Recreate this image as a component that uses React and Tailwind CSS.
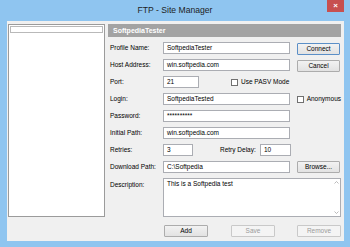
import React from "react";

const font = { fontFamily: '"Liberation Sans", Arial, sans-serif' };

const Field = ({ value, w }) => (
  <div
    className={`h-[12px] border border-[#abadb3] bg-white pl-[3px] text-[6.5px] leading-[10px] text-black ${w}`}
  >
    {value}
  </div>
);

const Button = ({ label, primary, disabled, className = "" }) => (
  <div
    className={`h-[12px] w-[43px] flex items-center justify-center rounded-[1px] border text-[6.5px] ${
      disabled
        ? "border-[#c9c9c9] bg-[#f4f4f4] text-[#9a9a9a]"
        : primary
        ? "border-[#5b8fc7] bg-gradient-to-b from-[#f2f2f2] to-[#e2e2e2] text-black"
        : "border-[#acacac] bg-gradient-to-b from-[#f2f2f2] to-[#e2e2e2] text-black"
    } ${className}`}
  >
    {label}
  </div>
);

const Check = ({ label, className = "" }) => (
  <div className={`flex items-center gap-[3px] ${className}`}>
    <div className="h-[7px] w-[7px] border border-[#707070] bg-white" />
    <span className="text-[6.5px] text-black">{label}</span>
  </div>
);

const Label = ({ text }) => (
  <div className="w-[55px] shrink-0 pl-[2px] text-[6.5px] text-black">{text}</div>
);

const App = () => {
  return (
    <div style={font} className="w-[350px] h-[247px] bg-[#8fc5f0] flex flex-col">
      <div className="relative h-[21px] flex items-center justify-center">
        <span className="text-[8.6px] text-[#1e1e1e] -mt-[1px]">FTP - Site Manager</span>
        <div className="absolute right-[6px] top-0 h-[12px] w-[17px] bg-[#c75050] flex items-center justify-center text-white text-[8px] font-bold leading-none">
          ×
        </div>
      </div>

      <div className="ml-[7px] mr-[6px] mb-[6px] flex-1 bg-[#f0f0f0] flex pt-[3px]">
        <div className="ml-[1px] w-[97px] h-[193px] border border-[#9b9b9b] bg-white p-[1px]">
          <div className="h-[7px] border border-[#b9b9b9]" />
        </div>

        <div className="ml-[3px] w-[233px] flex flex-col">
          <div className="h-[13px] bg-[#a3a3a3] pl-[5px] text-[7px] font-bold leading-[13px] text-white">
            SoftpediaTester
          </div>

          <div className="mt-[5px] flex flex-col gap-[5px]">
            <div className="flex items-center h-[12px]">
              <Label text="Profile Name:" />
              <Field value="SoftpediaTester" w="w-[127px]" />
              <Button label="Connect" primary className="ml-[7px] mt-[2px]" />
            </div>
            <div className="flex items-center h-[12px]">
              <Label text="Host Address:" />
              <Field value="win.softpedia.com" w="w-[127px]" />
              <Button label="Cancel" className="ml-[7px] mt-[2px]" />
            </div>
            <div className="flex items-center h-[12px]">
              <Label text="Port:" />
              <Field value="21" w="w-[36px]" />
              <Check label="Use PASV Mode" className="ml-[32px]" />
            </div>
            <div className="flex items-center h-[12px]">
              <Label text="Login:" />
              <Field value="SoftpediaTested" w="w-[127px]" />
              <Check label="Anonymous" className="ml-[7px]" />
            </div>
            <div className="flex items-center h-[12px]">
              <Label text="Password:" />
              <Field value="**********" w="w-[127px]" />
            </div>
            <div className="flex items-center h-[12px]">
              <Label text="Initial Path:" />
              <Field value="win.softpedia.com" w="w-[127px]" />
            </div>
            <div className="flex items-center h-[12px]">
              <Label text="Retries:" />
              <Field value="3" w="w-[30px]" />
              <span className="ml-[27px] w-[40px] text-[6.5px] text-black">Retry Delay:</span>
              <Field value="10" w="w-[31px]" />
            </div>
            <div className="flex items-center h-[12px]">
              <Label text="Download Path:" />
              <Field value="C:\Softpedia" w="w-[127px]" />
              <Button label="Browse..." className="ml-[7px] w-[42px]" />
            </div>
            <div className="flex">
              <div className="w-[55px] shrink-0 pl-[2px] pt-[2px] text-[6.5px] text-black">Description:</div>
              <div className="relative h-[39px] w-[178px] border border-[#abadb3] bg-white pl-[3px] text-[6.5px] leading-[10px] text-black">
                This is a Softpedia test
                <div className="absolute right-0 top-0 bottom-0 w-[8px] flex flex-col items-center justify-between py-[2px] text-[#b0b0b0]">
                  <svg width="5" height="3" viewBox="0 0 5 3">
                    <path d="M0.5 2.5 L2.5 0.5 L4.5 2.5" fill="none" stroke="#a8a8a8" strokeWidth="0.8" />
                  </svg>
                  <svg width="5" height="3" viewBox="0 0 5 3">
                    <path d="M0.5 0.5 L2.5 2.5 L4.5 0.5" fill="none" stroke="#a8a8a8" strokeWidth="0.8" />
                  </svg>
                </div>
              </div>
            </div>
          </div>

          <div className="mt-[8px] flex">
            <Button label="Add" className="ml-[56px] w-[44px]" />
            <Button label="Save" disabled className="ml-[23px] w-[44px]" />
            <Button label="Remove" disabled className="ml-[22px] w-[44px]" />
          </div>
        </div>
      </div>
    </div>
  );
};

export default App;
